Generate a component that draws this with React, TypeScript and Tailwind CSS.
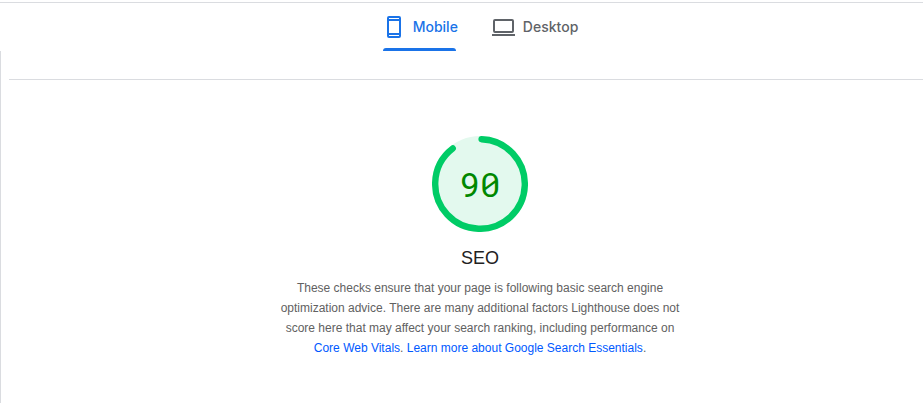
function MobileIcon() {
  return (
    <svg width="14" height="22" viewBox="0 0 14 22" fill="none" stroke="currentColor" strokeWidth="2" aria-hidden="true">
      <rect x="1" y="1" width="12" height="20" rx="1" />
      <path d="M1 4h12M1 18h12" />
    </svg>
  );
}

function DesktopIcon() {
  return (
    <svg width="23" height="18" viewBox="0 0 23 18" fill="none" stroke="currentColor" strokeWidth="2" aria-hidden="true">
      <rect x="2" y="2" width="19" height="12" rx="1" />
      <path d="M0 17h23" />
    </svg>
  );
}

function ScoreGauge({ score }: { score: number }) {
  const radius = 56;
  const length = 2 * Math.PI * radius;
  const arc = (score / 100) * length - 4;

  return (
    <div className="relative size-24">
      <svg viewBox="0 0 120 120" className="size-24" aria-hidden="true">
        <circle cx="60" cy="60" r="60" fill="#e3f9ee" />
        <circle
          cx="60"
          cy="60"
          r={radius}
          fill="none"
          stroke="#00cc66"
          strokeWidth="8"
          strokeLinecap="round"
          strokeDasharray={`${arc} ${length}`}
          transform="rotate(-87.95 60 60)"
        />
      </svg>
      <div className="absolute inset-0 flex items-center justify-center font-['Roboto_Mono','Inter',monospace] text-[34px] leading-8 text-[#008800] slashed-zero">
        {score}
      </div>
    </div>
  );
}

export default function App() {
  return (
    <div className="min-h-screen bg-white pt-0.5 font-['Liberation_Sans',Arial,sans-serif]">
      <nav className="flex h-[49px] justify-center gap-[34px] border-t border-[#dadce0] pl-[38px] font-['Inter',sans-serif] text-sm font-medium">
        <button type="button" className="relative flex items-center gap-3 pl-1 text-[#1a73e8]">
          <MobileIcon />
          Mobile
          <span className="absolute bottom-0 left-0 h-[3px] w-[73px] rounded-t-sm bg-[#1a73e8]" />
        </button>
        <button type="button" className="flex items-center gap-2 text-[#5f6368]">
          <DesktopIcon />
          Desktop
        </button>
      </nav>

      <main className="min-h-[calc(100vh-51px)] border-l border-[#dadce0] pt-7">
        <section className="ml-2 flex flex-col items-center border-t border-[#dadce0] pt-14 pl-7">
          <ScoreGauge score={90} />
          <h1 className="mt-3 text-lg leading-7 text-[#212121]">SEO</h1>
          <p className="mt-1.5 max-w-[404px] text-center text-xs leading-5 text-[#616161]">
            These checks ensure that your page is following basic search engine optimization advice. There are many
            additional factors Lighthouse does not score here that may affect your search ranking, including performance
            on{" "}
            <a href="#core-web-vitals" className="text-[#0059ff]">
              Core Web Vitals
            </a>
            .{" "}
            <a href="#search-essentials" className="text-[#0059ff]">
              Learn more about Google Search Essentials
            </a>
            .
          </p>
        </section>
      </main>
    </div>
  );
}
